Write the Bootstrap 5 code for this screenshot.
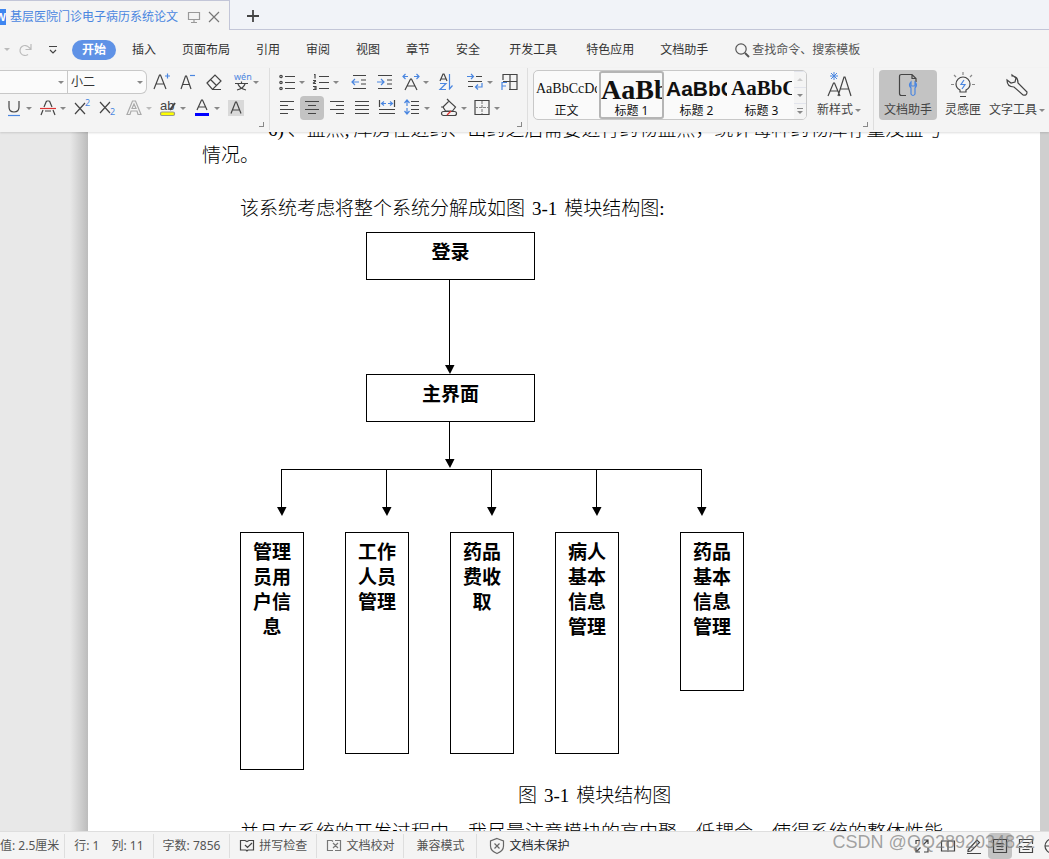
<!DOCTYPE html>
<html lang="zh-CN">
<head>
<meta charset="utf-8">
<meta name="viewport" content="width=device-width, initial-scale=1">
<title>基层医院门诊电子病历系统论文</title>
<link href="https://cdn.jsdelivr.net/npm/bootstrap@5.3.0/dist/css/bootstrap.min.css" rel="stylesheet">
<style>
  body { font: 12px/16px "Noto Sans", "Noto Sans CJK SC", sans-serif; color: #333; background: #e8e8e8; }
  button { border: 0; background: none; padding: 0; color: inherit; }
  svg { display: block; flex: none; fill: none; stroke: #444; stroke-width: 1.2; overflow: visible; }
  svg text { stroke: none; fill: #444; }
  .blue { stroke: #4a86e0; }
  svg text.blue { fill: #4a86e0; stroke: none; }

  .tabstrip { background: #f1f3f8; height: 30px; }
  .doc-tab { background: #f4f4f4; border: solid #c3c6d8; border-width: 1px 1px 0 0; width: 230px; color: #4a86e0; padding-top: 2px; }
  .tab-rest { border-bottom: 1px solid #c3c6d8; padding-top: 2px; }
  .tab-title { margin-right: 10px; }
  .logo { width: 6px; height: 16px; background: #3f86f0; color: #fff; font: bold 11px/16px "Liberation Sans", sans-serif; direction: rtl; overflow: hidden; }

  .menubar { background: #f4f4f4; height: 38px; gap: 26px; padding-top: 1px; }
  .menubar a { color: #333; text-decoration: none; }
  .menubar .active { background: #5f92e6; color: #fff; font-weight: 700; border-radius: 10px; padding: 2px 10px; margin: 0 -10px; }
  .menubar .wide { margin-left: 3px; }
  .quick { width: 56px; }
  .search input { border: 0; background: none; padding: 0; width: 120px; color: #555; }
  .search input::placeholder { color: #555; opacity: 1; }

  .ribbon { background: #f4f4f4; height: 64px; z-index: 2; box-shadow: 0 1px 2px #0002; }
  .group { border-right: 1px solid #dedede; padding: 2px 8px 0 7px; height: 62px; }
  .group::after { content: ""; position: absolute; right: 5px; bottom: 3px; width: 5px; height: 5px; border: solid #888; border-width: 0 1px 1px 0; }
  .font-group { padding: 2px 10px 0 0; }
  .plain, .styles-group { padding-left: 5px; }
  .plain::after { display: none; }
  .plain { border: 0; }
  .bar { display: flex; align-items: center; height: 24px; gap: 6px; }
  .bar + .bar { margin-top: 2px; }
  .tight { gap: 5px; }
  .tool { width: 20px; height: 24px; display: flex; align-items: center; }
  .drop { width: 28px; }
  .caret::after { content: ""; border: solid transparent; border-width: 3px 3px 0; border-top-color: #888; margin-left: 2px; flex: none; }
  .pale::after { border-top-color: #bbb; }
  .on { background: #c3c3c3; border-radius: 4px; box-shadow: -2px 0 #c3c3c3, 2px 0 #c3c3c3; }
  .combo { border: 1px solid #c8c8c8; background: #fbfbfb; height: 24px; padding: 0 3px; color: #333; appearance: none; }
  .family { width: 68px; }
  .fsize { width: 79px; }
  .combo-wrap { position: relative; }
  .combo-wrap::after { content: ""; position: absolute; right: 4px; top: 11px; border: solid transparent; border-width: 3px 3px 0; border-top-color: #888; }
  .gallery { border: 1px solid #c8c8c8; border-radius: 5px; background: #fafafa; height: 50px; overflow: hidden; color: #111; }
  .look { width: 65px; overflow: hidden; white-space: nowrap; padding: 0 1px; border: 1px solid transparent; height: 48px; }
  .look b, .look i { display: block; height: 31px; text-align: left; font-style: normal; overflow: hidden; }
  .look .s0 { font: 14px/31px "Liberation Serif", serif; }
  .look .s1 { font: bold 28px/31px "Liberation Serif", serif; }
  .look .s2 { font: bold 21px/31px "Liberation Sans", sans-serif; }
  .look .s3 { font: bold 21px/31px "Liberation Serif", serif; }
  .look span { display: block; line-height: 13px; }
  .chosen { border: 2px solid #b5b5b5; border-radius: 3px; padding: 0; }
  .chosen b { height: 30px; }
  .spin { width: 12px; background: #f4f4f4; }
  .spin button { flex: 1; display: flex; align-items: center; justify-content: center; border-top: 1px solid #e2e4ec; }
  .big { height: 50px; display: flex; flex-direction: column; align-items: center; justify-content: space-between; padding: 2px 0 2px; color: #444; white-space: nowrap; }
  .big.on { background: #c3c3c3; padding-left: 5px; padding-right: 5px; box-shadow: none; }
  .big .caret { display: flex; align-items: center; }
  .new-style { margin: 0 4px 0 10px; }

  .canvas-left { width: 88px; flex: none; background: linear-gradient(to right, #e8e8e8 70px, #bcbcbc); }
  .canvas-right { width: 9px; flex: none; background: #cfcfcf; }
  .sheet { background: #fff; color: #000; font: 300 19px/26px "Noto Sans CJK SC", sans-serif; padding: 0 90px 0 114px; }
  .sheet p { margin-bottom: 0; white-space: nowrap; }
  .scrolled { margin-top: -17px; padding-left: 66px; }
  .half { font: 19px/20px "Liberation Serif", serif; }
  .fignum { margin: 0 7px; }
  .indent { padding-left: 38px; }
  .after-blank { margin-top: 27px; }
  .after-caption { margin-top: 11px; }
  .caption-line { padding-left: 316px; }
  .chart { width: 504px; margin: 12px 0 11px 38px; font-weight: 700; line-height: 25px; text-align: center; }
  .node { border: 1px solid #000; padding-top: 5px; }
  .step { width: 169px; height: 48px; margin-left: 126px; }
  .leaves { gap: 41px; }
  .leaf { width: 64px; padding: 5px 11px 0 11px; }
  .h-l { height: 238px; } .h-m { height: 222px; } .h-s { height: 159px; }
  .chart svg { stroke: #000; stroke-width: 1; shape-rendering: crispEdges; }
  .chart svg .tip { fill: #000; stroke: none; shape-rendering: auto; }

  .status { background: #f4f4f4; border-top: 1px solid #dedede; height: 28px; color: #555; z-index: 2; padding-top: 1px; }
  .cell { display: flex; align-items: center; height: 24px; border-right: 1px solid #dedede; padding: 0 9px; gap: 4px; white-space: nowrap; }
  .cell-first { padding: 0 5px 0 0; }
  .cell-wide { padding: 0 12px; }
  .view { width: 24px; height: 26px; display: flex; align-items: center; justify-content: center; flex: none; }
  .view.on { box-shadow: none; }
  .views { gap: 2px; margin-right: -15px; }
  .watermark { position: absolute; right: 14px; top: 0; font: 18px/20px "Liberation Sans", sans-serif; color: #777a; white-space: nowrap; }
</style>
</head>
<body class="d-flex flex-column vh-100 overflow-hidden">

<header>
  <div class="tabstrip d-flex">
    <div class="doc-tab d-flex align-items-center">
      <span class="logo">W</span>
      <span class="tab-title ms-1 text-nowrap">基层医院门诊电子病历系统论文</span>
      <svg width="12" height="12" style="stroke:#999"><path d="M.5 1.5h11v7H.5zM6 9v2.500M3 11.500h6"/></svg>
      <button class="ms-2" aria-label="关闭"><svg width="12" height="12" style="stroke:#777"><path d="M1 1l10 10M11 1L1 11"/></svg></button>
    </div>
    <div class="tab-rest flex-grow-1 d-flex align-items-center ps-3">
      <button aria-label="新建"><svg width="14" height="14" style="stroke-width:1.800"><path d="M7 1v12M1 7h12"/></svg></button>
    </div>
  </div>

  <nav class="menubar d-flex align-items-center text-nowrap">
    <div class="quick d-flex align-items-center ps-1">
      <svg width="6" height="4"><path d="M0 0h6l-3 3z" style="fill:#bbb;stroke:none"/></svg>
      <svg class="mx-2" width="15" height="14" style="stroke:#bbb"><path d="M10 11.500a5 5 0 1 1 1-7L13 6M13 1v5.500H7.500"/></svg>
      <svg class="ms-2" width="8" height="8"><path d="M0 .500h8M1 4l3 3 3-3"/></svg>
    </div>
    <a class="active" href="#">开始</a>
    <a href="#">插入</a><a href="#">页面布局</a><a href="#">引用</a><a href="#">审阅</a><a href="#">视图</a><a href="#">章节</a><a href="#">安全</a>
    <a class="wide" href="#">开发工具</a><a class="wide" href="#">特色应用</a><a href="#">文档助手</a>
    <label class="search d-flex align-items-center">
      <svg class="me-1" width="14" height="16" style="stroke:#555"><circle cx="7" cy="7" r="5.200"/><path d="M11 11l4 4" style="stroke-width:2"/></svg>
      <input type="text" placeholder="查找命令、搜索模板" aria-label="查找命令、搜索模板">
    </label>
  </nav>

  <div class="ribbon d-flex position-relative">
    <div class="group font-group position-relative">
      <div class="bar">
        <div class="d-flex">
          <span class="combo-wrap"><select class="combo family border-start-0" aria-label="字体"><option></option></select></span>
          <span class="combo-wrap"><select class="combo fsize border-start-0 rounded-end" aria-label="字号"><option>小二</option></select></span>
        </div>
        <button class="tool" aria-label="增大字号"><svg width="20" height="20"><path d="M1 17L6.500 3h1L13 17M3 12h8"/><path class="blue" d="M12 4h5M14.500 1.500v5"/></svg></button>
        <button class="tool" aria-label="减小字号"><svg width="20" height="20"><path d="M2 17L6.500 4h1L12 17M4 12.500h6"/><path class="blue" d="M11 3.500H16"/></svg></button>
        <button class="tool" aria-label="清除格式"><svg width="20" height="20"><path d="M2 11l8-8 6 6-8 8H7zM5.500 7.500l6 6M7 17.500h9"/></svg></button>
        <button class="tool drop caret" aria-label="拼音指南"><svg width="20" height="20"><text class="blue" x="3" y="8" font-size="9">wén</text><path d="M4 11.500h13M10.500 9.500v2M7 12c1 3 4 5 8 6M14 12c-1 3-4 5-8 6"/></svg></button>
      </div>
      <div class="bar ps-1">
        <button class="tool drop caret" aria-label="下划线"><svg width="20" height="20"><path d="M5 3v6q0 5 5 5t5-5V3"/><path class="blue" d="M4 17.500h12"/></svg></button>
        <button class="tool drop caret" aria-label="删除线"><svg width="20" height="20"><path d="M8.500 3h3M8.500 3L6 9M11.500 3L14 9M5 12l-2 5M15 12l2 5M7 13h6"/><path d="M2 10.500h16" style="stroke:#d33"/></svg></button>
        <button class="tool" aria-label="上标"><svg width="20" height="20"><path d="M3 5l10 11M13 5L3 16"/><text class="blue" x="13" y="8" font-size="9">2</text></svg></button>
        <button class="tool" aria-label="下标"><svg width="20" height="20"><path d="M2 4l10 11M12 4L2 15"/><text class="blue" x="12" y="17" font-size="9">2</text></svg></button>
        <button class="tool drop caret pale" aria-label="文字效果"><svg width="20" height="20" style="stroke:#aaa"><path d="M8.500 3h3L17 16.500h-3L13 13H7l-1 3.500H3zM8 10.500L10 6l2 4.500z"/></svg></button>
        <button class="tool drop caret" aria-label="突出显示"><svg width="20" height="20"><text x="2" y="12" font-size="13" font-family="Liberation Sans">ab</text><path d="M12 12l5-7" style="stroke-width:2"/><rect x="2.500" y="14" width="14" height="3.500" rx="1.500" style="fill:#ff0;stroke:#998"/></svg></button>
        <button class="tool drop caret" aria-label="字体颜色"><svg width="20" height="20"><path d="M5 12l4.500-10h1L15 12M6.500 9h7"/><rect x="3" y="15" width="14" height="3" style="fill:#00f;stroke:none"/></svg></button>
        <button class="tool" aria-label="字符底纹"><svg width="20" height="20"><rect x="2" y="2" width="16" height="16" style="fill:#d9d9d9;stroke:none"/><path d="M5 15.500L9.500 4h1L15 15.500M7 12h6"/></svg></button>
      </div>
    </div>

    <div class="group position-relative">
      <div class="bar">
        <button class="tool drop caret" aria-label="项目符号"><svg width="20" height="20"><path d="M8 4.500h10M8 10.500h10M8 16.500h10"/><circle cx="4" cy="4.500" r="1.200"/><circle cx="4" cy="10.500" r="1.200"/><circle cx="4" cy="16.500" r="1.200"/></svg></button>
        <button class="tool drop caret" aria-label="编号"><svg width="20" height="20"><path d="M8 4.500h10M8 10.500h10M8 16.500h10M3 2.500h1v4M2 8.500h3M2 11.500h3M5 8.500L2 11.500M2 14.500h3v3H2M3 16h2"/></svg></button>
        <button class="tool ms-1" aria-label="减少缩进"><svg width="20" height="20"><path d="M4 3.500h13M12 8h5M12 12h5M4 16.500h13"/><path class="blue" d="M10 10H3M6 7l-3 3 3 3"/></svg></button>
        <button class="tool" aria-label="增加缩进"><svg width="20" height="20"><path d="M3 3.500h14M12 8h5M12 12h5M3 16.500h14"/><path class="blue" d="M2 10h7M6 7l3 3-3 3"/></svg></button>
        <button class="tool drop caret" aria-label="字符缩放"><svg width="20" height="20"><path d="M4 18L9.500 7h1L16 18M6.500 14h7"/><path class="blue" d="M2 4.500h5M4.500 2L2 4.500 4.500 7M13 4.500h5M15.500 2L18 4.500 15.500 7"/></svg></button>
        <button class="tool" aria-label="排序"><svg width="20" height="20"><path d="M5 9l3-7h1l3 7M6 7h5"/><path class="blue" d="M5 11.500h6l-6 6h6M14.500 2v15M14 17.500l3.500-4"/></svg></button>
        <button class="tool drop caret ms-1" aria-label="显示标记"><svg width="20" height="20"><path d="M11 4.500h6M3 9.500h14M3 14.500h5"/><path class="blue" d="M2 4.500h6M6 2l2.500 2.500L6 7M17 11v4h-6M13 12.500L10.500 15l2.500 2.500"/></svg></button>
        <button class="tool" aria-label="制表位"><svg width="20" height="20"><path d="M4 8V2.500h14v15h-8M11 2.500v15M4 9.500h14"/><path class="blue" d="M8 10.500H3V18M3 14h4"/></svg></button>
      </div>
      <div class="bar tight">
        <button class="tool" aria-label="左对齐"><svg width="20" height="20"><path d="M3 3.500h14M3 7.500h8M3 11.500h14M3 15.500h8"/></svg></button>
        <button class="tool on" aria-label="居中"><svg width="20" height="20"><path d="M3 3.500h14M6 7.500h8M3 11.500h14M6 15.500h8"/></svg></button>
        <button class="tool" aria-label="右对齐"><svg width="20" height="20"><path d="M3 3.500h14M9 7.500h8M3 11.500h14M9 15.500h8"/></svg></button>
        <button class="tool" aria-label="两端对齐"><svg width="20" height="20"><path d="M3 3.500h14M3 7.500h14M3 11.500h14M3 15.500h14"/></svg></button>
        <button class="tool" aria-label="分散对齐"><svg width="20" height="20"><path d="M2.500 2v7M17.500 2v7M2 11.500h16M2 15.500h16"/><path class="blue" d="M5 5.500h4M7 3.500l-2.500 2L7 7.500M11 5.500h4M13 3.500l2.500 2-2.500 2"/></svg></button>
        <button class="tool drop caret" aria-label="行距"><svg width="20" height="20"><path d="M9 3.500h8M9 7.500h8M9 11.500h8M9 15.500h8"/><path class="blue" d="M5 2v6M2.500 5L5 2l2.500 3M5 10v6M2.500 13L5 16l2.500-3"/></svg></button>
        <button class="tool drop caret ms-1" aria-label="底纹"><svg width="20" height="20"><path d="M4 9l6-6 6.500 6-3 4H6.500zM10 3L8 1M2 9h3"/><rect x="2.500" y="13.500" width="15" height="4" rx="2"/><path d="M8 17l4-4" style="stroke:#d33"/></svg></button>
        <button class="tool drop caret" aria-label="边框"><svg width="20" height="20"><path d="M3 2.500h14v14H3z"/><path d="M10 3v13M3 9.500h14" stroke-dasharray="3 1" style="stroke:#888"/></svg></button>
      </div>
    </div>

    <div class="group styles-group position-relative d-flex">
      <div class="gallery d-flex">
        <button class="look"><i class="s0">AaBbCcDd</i><span>正文</span></button>
        <button class="look chosen"><b class="s1">AaBb</b><span>标题 1</span></button>
        <button class="look"><b class="s2">AaBbC</b><span>标题 2</span></button>
        <button class="look"><b class="s3">AaBbC</b><span>标题 3</span></button>
        <div class="spin d-flex flex-column">
          <button aria-label="向上"><svg width="6" height="3"><path d="M0 3h6L3 0z" style="fill:#ccc;stroke:none"/></svg></button>
          <button aria-label="向下"><svg width="6" height="3"><path d="M0 0h6L3 3z" style="fill:#888;stroke:none"/></svg></button>
          <button aria-label="更多样式"><svg width="6" height="7"><path d="M0 .500h6" style="stroke:#888"/><path d="M0 3h6L3 6z" style="fill:#888;stroke:none"/></svg></button>
        </div>
      </div>
      <button class="big new-style">
        <svg width="26" height="26"><path d="M2 24L7.500 11h1L14 24M4.500 19h7M12 24L18 5h1l6 19M14.500 17H23"/><path class="blue" d="M8 0v8M4 4h8M5 1l6 6M11 1L5 7" stroke-width="1"/></svg>
        <span class="caret">新样式</span>
      </button>
    </div>

    <div class="group plain d-flex gap-1">
      <button class="big on">
        <svg width="22" height="26"><path d="M9 23.500H4.500q-2 0-2-2v-17q0-2 2-2H15l4 4V10M15 3v3.500h4"/><path class="blue" d="M14 10q-3 3 0 6v6q2 3 4 0v-6q3-3 0-6v4h-4z"/></svg>
        <span>文档助手</span>
      </button>
      <button class="big mx-1">
        <svg width="26" height="26"><path d="M10 20v-2q-4-2-4-6a7 7 0 0 1 14 0q0 4-4 6v2zM10 24.500h6"/><path d="M13 0v3M1 12.500h3M22 12.500h3M4 3l2 2M22 3l-2 2" style="stroke:#888"/><path class="blue" d="M14 8l-3 4.500h4L12 17"/></svg>
        <span>灵感匣</span>
      </button>
      <button class="big">
        <svg width="26" height="26"><path d="M8 3l4 3-1 4-4 1-4-3q0 7 7 7l9 8q4 1 4-3l-9-9q0-7-6-7z"/></svg>
        <span class="caret">文字工具</span>
      </button>
    </div>
  </div>
</header>

<main class="d-flex flex-grow-1 overflow-hidden">
  <div class="canvas-left"></div>
  <article class="sheet flex-grow-1 overflow-hidden">
    <p class="scrolled"><span class="half me-1">6)</span>、盘点<span class="half me-1">,</span>库房在进药、出药之后需要进行药物盘点，统计每种药物库存量及盘亏</p>
    <p>情况。</p>
    <p class="indent after-blank">该系统考虑将整个系统分解成如图<span class="half fignum">3-1</span>模块结构图<span class="half">:</span></p>
    <div class="chart">
      <div class="node step">登录</div>
      <svg width="504" height="94"><path d="M209.500 0v88"/><path class="tip" d="M205 85h9.500l-4.500 9z"/></svg>
      <div class="node step">主界面</div>
      <svg width="504" height="110"><path d="M209.500 0v40M41.500 90V47.500h420V90M146.500 47v43M251.500 47v43M356.500 47v43"/>
        <path class="tip" d="M205 37h9.500l-4.500 9zM37 85h9.500l-4.500 9zM142 85h9.500l-4.500 9zM247 85h9.500l-4.500 9zM352 85h9.500l-4.500 9zM457 85h9.500l-4.500 9z"/></svg>
      <div class="leaves d-flex align-items-start">
        <div class="node leaf h-l">管理员用户信息</div>
        <div class="node leaf h-m">工作人员管理</div>
        <div class="node leaf h-m">药品费收取</div>
        <div class="node leaf h-m">病人基本信息管理</div>
        <div class="node leaf h-s ms-auto">药品基本信息管理</div>
      </div>
    </div>
    <p class="caption-line">图<span class="half fignum">3-1</span>模块结构图</p>
    <p class="indent after-caption">并且在系统的开发过程中，我尽量注意模块的高内聚，低耦合，使得系统的整体性能</p>
  </article>
  <div class="canvas-right"></div>
</main>

<footer class="status d-flex align-items-center position-relative">
  <div class="cell cell-first">值: 2.5厘米</div>
  <div class="cell"><span class="me-2">行: 1</span><span>列: 11</span></div>
  <div class="cell">字数: 7856</div>
  <button class="cell"><svg width="16" height="14"><path d="M8 12l-1-1H1.500V1.500H6l2 1 2-1h4.500V11H9zM6 6l2.500 2.500L13 4"/></svg>拼写检查</button>
  <button class="cell"><svg width="16" height="14" style="stroke:#777"><path d="M7 11.500H1.500v-10H6l1 1M9 1.500h5.500v10H9M7 4l5 5M12 4L7 9"/></svg>文档校对</button>
  <div class="cell cell-wide">兼容模式</div>
  <button class="cell cell-wide border-0 text-dark"><svg width="16" height="16" style="stroke:#666"><path d="M8 .500L14.500 3v5q0 5-6.500 7.500Q1.500 13 1.500 8V3zM5.500 5.500l5 5M10.500 5.500l-5 5"/></svg>文档未保护</button>
  <div class="views d-flex ms-auto">
    <button class="view" aria-label="全屏"><svg width="16" height="16"><path d="M2 6V2.500h4M10 2h4v4M14 10v4h-4M6 14H2v-4M14 2L9.500 6.500M2 14l4.500-4.500"/></svg></button>
    <button class="view" aria-label="阅读"><svg width="16" height="16"><path d="M8 3v11M8 3H1.500v10H7M8 3h6.500v10H9"/></svg></button>
    <button class="view" aria-label="写作"><svg width="16" height="16"><path d="M2 12l9-10 2.500 2.500L5 13l-3 .500zM1 15.500h14"/></svg></button>
    <button class="view on" aria-label="页面"><svg width="16" height="16"><path d="M1.500 1.500h13v13h-13zM4.500 5.500h7M4.500 8.500h7M4.500 11.500h7"/></svg></button>
    <button class="view" aria-label="大纲"><svg width="16" height="16"><path d="M1.500 6V1.500h13V6M1.500 10v4.500h13V10M4.500 4.500h7M1 8.500h3M6 8.500h8M4.500 11.500h7"/></svg></button>
    <button class="view" aria-label="Web 版式"><svg width="16" height="16"><circle cx="8" cy="8" r="7"/><path d="M1 8h14M8 1v14"/></svg></button>
  </div>
  <div class="watermark">CSDN @QQ2892034822</div>
</footer>

<script src="https://cdn.jsdelivr.net/npm/bootstrap@5.3.0/dist/js/bootstrap.bundle.min.js"></script>
</body>
</html>
